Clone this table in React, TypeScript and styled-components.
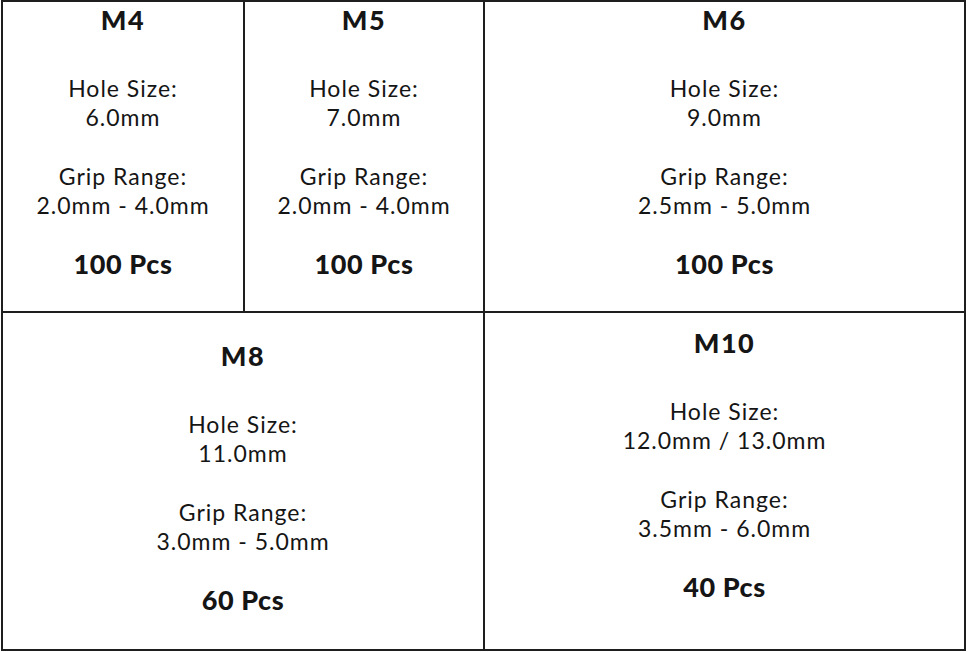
import React from "react";
import styled, { createGlobalStyle } from "styled-components";

const Global = createGlobalStyle`
  html, body { margin: 0; padding: 0; background: #ffffff; }
  body { font-family: Lato, "Open Sans", sans-serif; color: #151515; }
`;

const Page = styled.div`
  padding-left: 1px;
  width: 968px;
  height: 652px;
  box-sizing: border-box;
`;

const Table = styled.div`
  display: grid;
  grid-template-columns: 240px 238px 479px;
  grid-template-rows: 309px 336px;
  gap: 2px;
  padding: 2px;
  background: #1e1e1e;
  width: max-content;
`;

const Cell = styled.div<{ $span?: number; $pad: number }>`
  background: #fff;
  grid-column: span ${(p) => p.$span ?? 1};
  display: flex;
  flex-direction: column;
  align-items: center;
  justify-content: center;
  text-align: center;
  padding-bottom: ${(p) => p.$pad}px;
`;

const Title = styled.div`
  font-size: 27px;
  font-weight: 900;
  line-height: 36px;
  letter-spacing: 1.5px;
  margin-bottom: 36px;
`;

const Group = styled.div`
  font-size: 23px;
  font-weight: 400;
  line-height: 29px;
  letter-spacing: 1px;
  & + & { margin-top: 30px; }
`;

const Count = styled.div`
  font-size: 27px;
  font-weight: 900;
  line-height: 36px;
  letter-spacing: 0.6px;
  margin-top: 26px;
`;

type Item = { size: string; hole: string; grip: string; pcs: string; span?: number; pad: number };

const items: Item[] = [
  { size: "M4", hole: "6.0mm", grip: "2.0mm - 4.0mm", pcs: "100 Pcs", pad: 30 },
  { size: "M5", hole: "7.0mm", grip: "2.0mm - 4.0mm", pcs: "100 Pcs", pad: 30 },
  { size: "M6", hole: "9.0mm", grip: "2.5mm - 5.0mm", pcs: "100 Pcs", pad: 30 },
  { size: "M8", hole: "11.0mm", grip: "3.0mm - 5.0mm", pcs: "60 Pcs", span: 2, pad: 6 },
  { size: "M10", hole: "12.0mm / 13.0mm", grip: "3.5mm - 6.0mm", pcs: "40 Pcs", pad: 32 },
];

export default function App() {
  return (
    <Page>
      <Global />
      <Table>
        {items.map((it) => (
          <Cell key={it.size} $span={it.span} $pad={it.pad}>
            <Title>{it.size}</Title>
            <Group>
              Hole Size:
              <br />
              {it.hole}
            </Group>
            <Group>
              Grip Range:
              <br />
              {it.grip}
            </Group>
            <Count>{it.pcs}</Count>
          </Cell>
        ))}
      </Table>
    </Page>
  );
}
